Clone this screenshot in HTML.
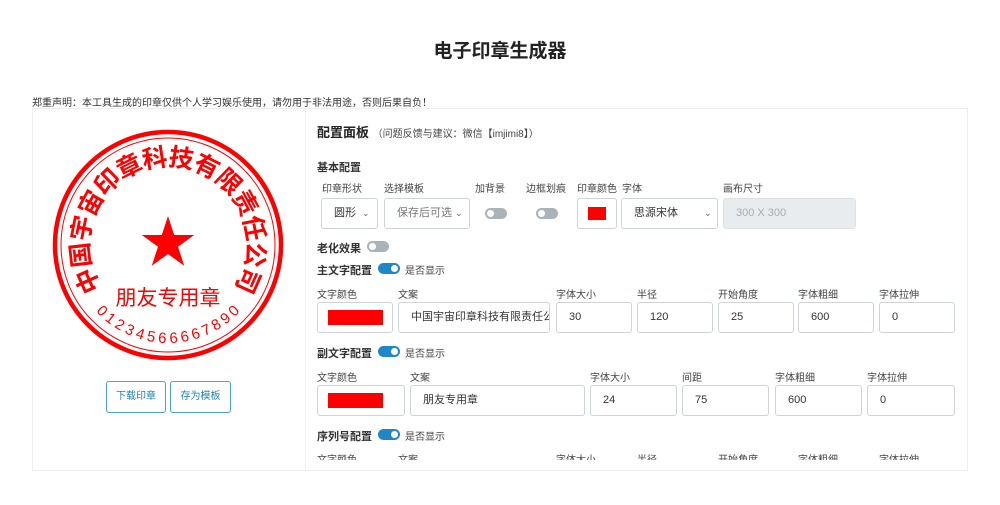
<!DOCTYPE html>
<html><head><meta charset="utf-8"><style>
*{box-sizing:border-box;margin:0;padding:0}
body{width:1000px;height:505px;background:#fff;font-family:"Liberation Sans","Noto Sans CJK SC",sans-serif;color:#333;position:relative;overflow:hidden}
.a{position:absolute;white-space:nowrap}
.t{font-size:10px;color:#444}
.h{font-size:11px;font-weight:bold;color:#333}
.in{position:absolute;height:31px;border:1px solid #cfd4da;border-radius:3px;background:#fff;font-size:11px;color:#333;padding-left:12px;line-height:29px;overflow:hidden;white-space:nowrap}
.sw{position:absolute;width:22px;height:11px;border-radius:6px;background:#aab2ba}
.sw::after{content:"";position:absolute;top:2px;left:2px;width:7px;height:7px;border-radius:50%;background:#fff}
.sw.on{background:#1e87c8}
.sw.on::after{left:13px}
.red{position:absolute;background:#f00}
.btn{position:absolute;height:32px;border:1px solid #4aa3cf;border-radius:3px;color:#1e7fb8;font-size:10px;text-align:center;line-height:30px;background:#fff}
.ch{position:absolute;font-size:9px;color:#666}
</style></head><body>
<div class="a" style="left:0;width:1000px;text-align:center;top:36px;font-size:19px;font-weight:bold;color:#222">电子印章生成器</div>
<div class="a" style="left:32px;top:94px;font-size:10px;color:#333">郑重声明：本工具生成的印章仅供个人学习娱乐使用，请勿用于非法用途，否则后果自负！</div>
<div style="position:absolute;left:32px;top:108px;width:936px;height:363px;border:1px solid #eceef0"></div>
<div style="position:absolute;left:305px;top:108px;width:1px;height:363px;background:#eceef0"></div>

<svg style="position:absolute;left:0;top:0" width="340" height="400" font-family="Liberation Sans,Noto Sans CJK SC,sans-serif">
<circle cx="168" cy="245" r="113" fill="none" stroke="#f00" stroke-width="4.5"/>
<circle cx="168" cy="245" r="107" fill="none" stroke="#f00" stroke-width="1"/>
<polygon fill="#f00" points="168,216 174.2,235 194.2,235 178,246.7 184.2,265.7 168,254 151.8,265.7 158,246.7 141.8,235 161.8,235"/>
<g fill="#f00" font-size="25" font-weight="bold" text-anchor="middle">
<text x="168" y="166" transform="rotate(-114 168 245)">中</text>
<text x="168" y="166" transform="rotate(-96.46 168 245)">国</text>
<text x="168" y="166" transform="rotate(-78.92 168 245)">宇</text>
<text x="168" y="166" transform="rotate(-61.38 168 245)">宙</text>
<text x="168" y="166" transform="rotate(-43.85 168 245)">印</text>
<text x="168" y="166" transform="rotate(-26.31 168 245)">章</text>
<text x="168" y="166" transform="rotate(-8.77 168 245)">科</text>
<text x="168" y="166" transform="rotate(8.77 168 245)">技</text>
<text x="168" y="166" transform="rotate(26.31 168 245)">有</text>
<text x="168" y="166" transform="rotate(43.85 168 245)">限</text>
<text x="168" y="166" transform="rotate(61.38 168 245)">责</text>
<text x="168" y="166" transform="rotate(78.92 168 245)">任</text>
<text x="168" y="166" transform="rotate(96.46 168 245)">公</text>
<text x="168" y="166" transform="rotate(114 168 245)">司</text>
</g>
<text x="168" y="305" fill="#f00" font-size="21" text-anchor="middle">朋友专用章</text>
<g fill="#f00" font-size="15" text-anchor="middle">
<text x="168" y="343" transform="rotate(45 168 245)">0</text>
<text x="168" y="343" transform="rotate(38.08 168 245)">1</text>
<text x="168" y="343" transform="rotate(31.15 168 245)">2</text>
<text x="168" y="343" transform="rotate(24.23 168 245)">3</text>
<text x="168" y="343" transform="rotate(17.31 168 245)">4</text>
<text x="168" y="343" transform="rotate(10.38 168 245)">5</text>
<text x="168" y="343" transform="rotate(3.46 168 245)">6</text>
<text x="168" y="343" transform="rotate(-3.46 168 245)">6</text>
<text x="168" y="343" transform="rotate(-10.38 168 245)">6</text>
<text x="168" y="343" transform="rotate(-17.31 168 245)">6</text>
<text x="168" y="343" transform="rotate(-24.23 168 245)">7</text>
<text x="168" y="343" transform="rotate(-31.15 168 245)">8</text>
<text x="168" y="343" transform="rotate(-38.08 168 245)">9</text>
<text x="168" y="343" transform="rotate(-45 168 245)">0</text>
</g>
</svg>
<div class="btn" style="left:106px;top:381px;width:60px">下载印章</div>
<div class="btn" style="left:170px;top:381px;width:61px">存为模板</div>

<div class="a" style="left:317px;top:122px;font-size:13px;font-weight:bold;color:#222">配置面板 <span style="font-size:10px;font-weight:normal;color:#444">（问题反馈与建议：微信【imjimi8】）</span></div>
<div class="a h" style="left:317px;top:159px">基本配置</div>
<div class="a t" style="left:322px;top:180px">印章形状</div>
<div class="a t" style="left:384px;top:180px">选择模板</div>
<div class="a t" style="left:475px;top:180px">加背景</div>
<div class="a t" style="left:526px;top:180px">边框划痕</div>
<div class="a t" style="left:577px;top:180px">印章颜色</div>
<div class="a t" style="left:622px;top:180px">字体</div>
<div class="a t" style="left:723px;top:180px">画布尺寸</div>
<div class="in" style="left:321px;top:198px;width:57px">圆形<span class="ch" style="left:40px">⌄</span></div>
<div class="in" style="left:384px;top:198px;width:86px;color:#777">保存后可选<span class="ch" style="left:70px">⌄</span></div>
<div class="sw" style="left:485px;top:208px"></div>
<div class="sw" style="left:536px;top:208px"></div>
<div class="in" style="left:577px;top:198px;width:40px"><div class="red" style="left:10px;top:8px;width:18px;height:13px"></div></div>
<div class="in" style="left:621px;top:198px;width:97px">思源宋体<span class="ch" style="left:82px">⌄</span></div>
<div class="in" style="left:723px;top:198px;width:133px;background:#e9ecef;border-color:#dde1e5;color:#aaa">300 X 300</div>
<div class="a h" style="left:317px;top:240px">老化效果</div>
<div class="sw" style="left:367px;top:241px"></div>
<div class="a h" style="left:317px;top:262px">主文字配置</div>
<div class="sw on" style="left:378px;top:263px"></div>
<div class="a t" style="left:405px;top:262px">是否显示</div>
<div class="a t" style="left:317px;top:286px">文字颜色</div>
<div class="a t" style="left:398px;top:286px">文案</div>
<div class="a t" style="left:556px;top:286px">字体大小</div>
<div class="a t" style="left:637px;top:286px">半径</div>
<div class="a t" style="left:718px;top:286px">开始角度</div>
<div class="a t" style="left:798px;top:286px">字体粗细</div>
<div class="a t" style="left:879px;top:286px">字体拉伸</div>
<div class="in" style="left:317px;top:302px;width:76px"><div class="red" style="left:10px;top:7px;width:55px;height:15px"></div></div>
<div class="in" style="left:398px;top:302px;width:152px">中国宇宙印章科技有限责任公</div>
<div class="in" style="left:556px;top:302px;width:76px">30</div>
<div class="in" style="left:637px;top:302px;width:76px">120</div>
<div class="in" style="left:718px;top:302px;width:76px">25</div>
<div class="in" style="left:798px;top:302px;width:76px">600</div>
<div class="in" style="left:879px;top:302px;width:76px">0</div>
<div class="a h" style="left:317px;top:345px">副文字配置</div>
<div class="sw on" style="left:378px;top:346px"></div>
<div class="a t" style="left:405px;top:345px">是否显示</div>
<div class="a t" style="left:317px;top:369px">文字颜色</div>
<div class="a t" style="left:410px;top:369px">文案</div>
<div class="a t" style="left:590px;top:369px">字体大小</div>
<div class="a t" style="left:682px;top:369px">间距</div>
<div class="a t" style="left:775px;top:369px">字体粗细</div>
<div class="a t" style="left:867px;top:369px">字体拉伸</div>
<div class="in" style="left:317px;top:385px;width:88px"><div class="red" style="left:10px;top:7px;width:55px;height:15px"></div></div>
<div class="in" style="left:410px;top:385px;width:175px">朋友专用章</div>
<div class="in" style="left:590px;top:385px;width:87px">24</div>
<div class="in" style="left:682px;top:385px;width:87px">75</div>
<div class="in" style="left:775px;top:385px;width:87px">600</div>
<div class="in" style="left:867px;top:385px;width:88px">0</div>
<div class="a h" style="left:317px;top:428px">序列号配置</div>
<div class="sw on" style="left:378px;top:429px"></div>
<div class="a t" style="left:405px;top:428px">是否显示</div>
<div style="position:absolute;left:306px;top:450px;width:660px;height:10px;overflow:hidden">
<div class="a t" style="left:11px;top:1px">文字颜色</div>
<div class="a t" style="left:92px;top:1px">文案</div>
<div class="a t" style="left:250px;top:1px">字体大小</div>
<div class="a t" style="left:331px;top:1px">半径</div>
<div class="a t" style="left:412px;top:1px">开始角度</div>
<div class="a t" style="left:492px;top:1px">字体粗细</div>
<div class="a t" style="left:573px;top:1px">字体拉伸</div>
</div>
</body></html>
